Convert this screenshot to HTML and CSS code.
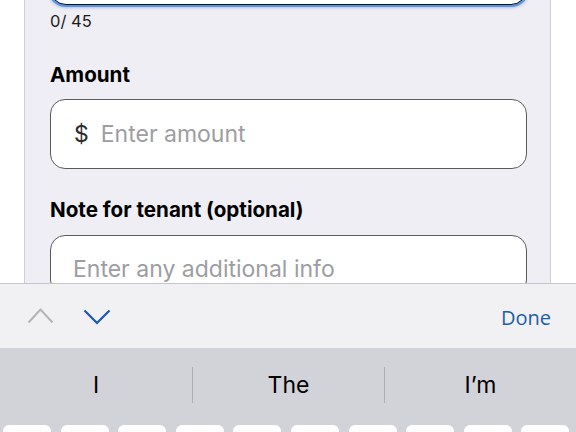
FILE: index.html
```html
<!DOCTYPE html>
<html lang="en">
<head>
<meta charset="utf-8">
<title>Add charge</title>
<link rel="stylesheet" href="styles.css">
</head>
<body>
<div class="card">
  <div class="field focused"></div>
  <div class="counter">0/ 45</div>
  <div class="label amount-label">Amount</div>
  <div class="field input-row">
    <span class="prefix">$</span>
    <span class="placeholder">Enter amount</span>
  </div>
  <div class="label note-label">Note for tenant (optional)</div>
  <div class="field textarea">
    <span class="placeholder">Enter any additional info</span>
  </div>
</div>

<div class="keyboard">
  <div class="accessory">
    <div class="arrows">
      <svg class="chev up" width="27" height="17" viewBox="0 0 27 17"><polyline points="1.5,15.5 13.5,2.5 25.5,15.5" fill="none" stroke="currentColor" stroke-width="2"/></svg>
      <svg class="chev down" width="28" height="16" viewBox="0 0 28 16"><polyline points="1.5,1.5 14,14 26.5,1.5" fill="none" stroke="currentColor" stroke-width="2.2"/></svg>
    </div>
    <span class="done">Done</span>
  </div>
  <div class="kb">
    <div class="suggestions">
      <div class="sugg">I</div>
      <div class="sugg sep">The</div>
      <div class="sugg sep">I’m</div>
    </div>
    <div class="keys">
      <div class="key"></div><div class="key"></div><div class="key"></div><div class="key"></div><div class="key"></div>
      <div class="key"></div><div class="key"></div><div class="key"></div><div class="key"></div><div class="key"></div>
    </div>
  </div>
</div>
</body>
</html>
```

FILE: styles.css
```css
html, body {
  margin: 0;
  padding: 0;
  background: #ffffff;
  font-family: Inter, "Noto Sans", sans-serif;
  overflow: hidden;
  height: 432px;
}

.card {
  margin-top: -65px;
  margin-left: 24px;
  width: 527px;
  height: 497px;
  box-sizing: border-box;
  background: #efeef4;
  border-left: 1px solid #cfcfd4;
  border-right: 1px solid #cfcfd4;
  padding: 0 23px 0 25px;
}

.field {
  box-sizing: border-box;
  background: #ffffff;
  border: 1px solid #5a5a5e;
  border-radius: 15px;
}

.focused {
  height: 70px;
  border: 1.5px solid #111111;
  border-radius: 16px;
  box-shadow: 0 0 0 2px #5a93e3, 0 0 3px 3px rgba(90, 147, 227, 0.45);
}

.counter {
  margin-top: 6px;
  font-size: 16.5px;
  line-height: 20px;
  color: #1c1c1e;
}

.label {
  font-size: 20.6px;
  line-height: 26px;
  font-weight: 700;
  color: #000000;
}

.amount-label {
  margin-top: 31px;
  margin-bottom: 11px;
}

.note-label {
  margin-top: 28px;
  margin-bottom: 12px;
}

.input-row {
  height: 70px;
  display: flex;
  align-items: center;
  gap: 12px;
  padding-left: 23px;
}

.prefix {
  font-size: 23px;
  color: #2c2c2e;
}

.placeholder {
  font-size: 23px;
  line-height: 28px;
  color: #9d9da2;
}

.textarea {
  height: 60px;
  padding: 19px 0 0 22px;
}

.keyboard {
  position: fixed;
  left: 0;
  right: 0;
  bottom: 0;
  height: 149px;
  display: flex;
  flex-direction: column;
  overflow: hidden;
}

.accessory {
  flex: 0 0 65px;
  box-sizing: border-box;
  border-top: 1px solid #c6c6ca;
  background: #f1f1f3;
  display: flex;
  align-items: center;
  justify-content: space-between;
  padding: 0 25px 0 27px;
}

.arrows {
  display: flex;
  align-items: center;
  gap: 29px;
}

.chev.up { color: #b3b3b8; margin-top: -2px; }
.chev.down { color: #1a58b4; margin-top: 2px; }

.done {
  font-family: "Open Sans", sans-serif;
  font-size: 20px;
  color: #1e5ea9;
  margin-top: 2px;
}

.kb {
  flex: 1 1 auto;
  min-height: 0;
  background: #d1d3d9;
  overflow: hidden;
}

.suggestions {
  height: 77px;
  display: grid;
  grid-template-columns: repeat(3, 1fr);
  align-items: start;
}

.sugg {
  margin-top: 19px;
  height: 36px;
  display: flex;
  align-items: center;
  justify-content: center;
  font-size: 23px;
  color: #000000;
}

.sugg.sep {
  border-left: 1px solid #aeb0b7;
}

.keys {
  display: flex;
  gap: 9.6px;
  padding-left: 3px;
}

.key {
  width: 48px;
  height: 7px;
  background: #ffffff;
  border-radius: 6px 6px 0 0;
}
```
